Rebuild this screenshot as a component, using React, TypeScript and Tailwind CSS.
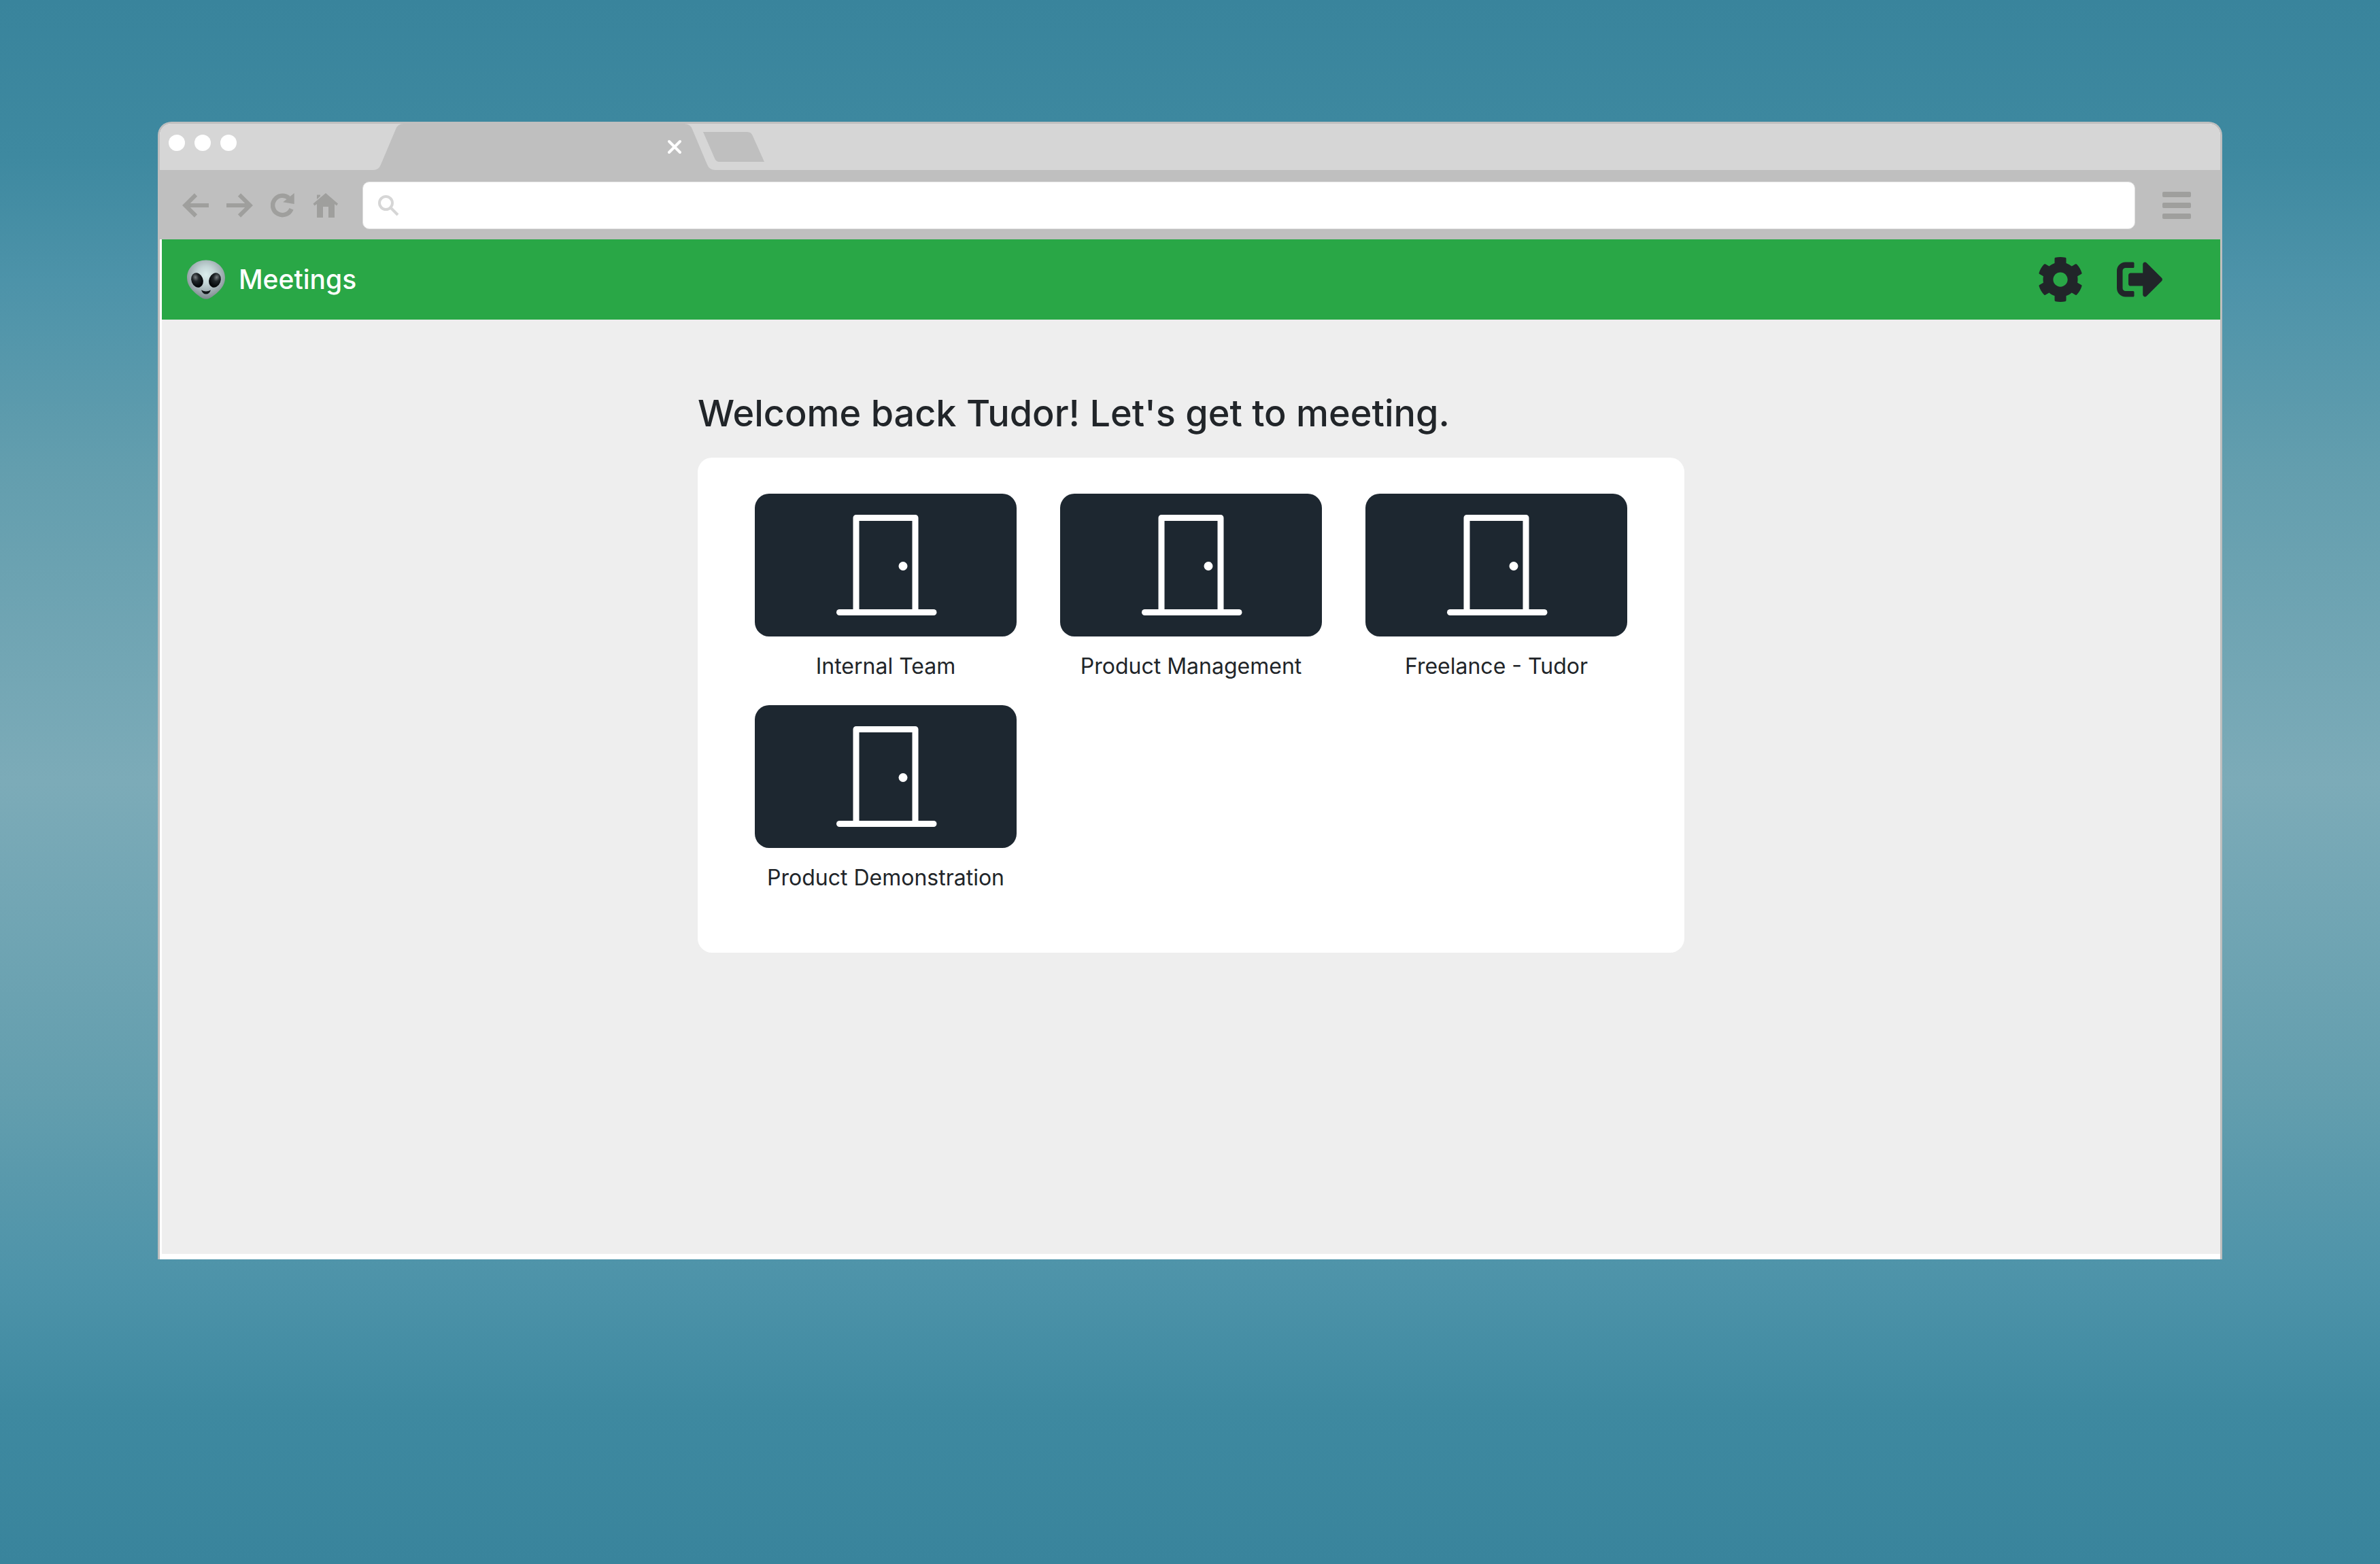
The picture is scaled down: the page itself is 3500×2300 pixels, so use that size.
import React from "react";
import { FaCog, FaSignOutAlt } from "react-icons/fa";

const rooms = ["Internal Team", "Product Management", "Freelance - Tudor", "Product Demonstration"];

function TabShape() {
  return (
    <svg className="absolute top-0 left-[300px]" width="600" height="68" viewBox="0 0 600 68" fill="#bfbfbf" aria-hidden="true">
      <path d="M14 68 Q22 68 25 60 L47 8 Q50 0 58 0 H471 Q480 0 483 8 L505 60 Q508 68 517 68 Z" />
      <path d="M499 12 H564 Q570 12 572 18 L589 56 H523 Q518 56 516 51 Z" />
    </svg>
  );
}

function BackIcon() {
  return (
    <svg width="39" height="36" viewBox="0 0 39 36" fill="none" stroke="#9f9f9d" strokeWidth="6" aria-hidden="true">
      <path d="M39 18 H5" />
      <path d="M20 2.5 L4.3 18 L20 33.5" />
    </svg>
  );
}

function ForwardIcon() {
  return (
    <svg width="39" height="36" viewBox="0 0 39 36" fill="none" stroke="#9f9f9d" strokeWidth="6" aria-hidden="true">
      <path d="M0 18 H34" />
      <path d="M19 2.5 L34.700 18 L19 33.5" />
    </svg>
  );
}

function ReloadIcon() {
  return (
    <svg width="36" height="36" viewBox="0 0 36 36" aria-hidden="true">
      <path d="M30.500 23.200 A14.200 14.200 0 1 1 26.500 7.100" fill="none" stroke="#9f9f9d" strokeWidth="6.500" />
      <path d="M34.700 0 V16 L18.200 13.300 Z" fill="#9f9f9d" />
    </svg>
  );
}

function HomeIcon() {
  return (
    <svg width="38" height="36" viewBox="0 0 38 36" fill="#9f9f9d" aria-hidden="true">
      <path d="M19 0 L37 15.500 L35 18.500 L32 16 V36 H23 V20 H15 V36 H6 V16 L2.500 18.500 L0.500 15.500 Z" />
      <path d="M6 2.500 H11 V4.500 L6 9 Z" />
    </svg>
  );
}

function SearchIcon() {
  return (
    <svg width="31" height="31" viewBox="0 0 31 31" fill="none" stroke="#d6d6d6" strokeWidth="4" aria-hidden="true">
      <circle cx="11.500" cy="11.500" r="9.500" />
      <path d="M18 18 L29 29" />
    </svg>
  );
}

function AlienLogo() {
  return (
    <svg width="58" height="58" viewBox="0 0 58 58" aria-hidden="true">
      <defs>
        <radialGradient id="skin" cx="0.5" cy="0.38" r="0.62">
          <stop offset="0" stopColor="#dcefee" />
          <stop offset="0.35" stopColor="#c4d6d7" />
          <stop offset="0.75" stopColor="#9aa8ac" />
          <stop offset="1" stopColor="#7c878b" />
        </radialGradient>
        <radialGradient id="leftEye" cx="0.45" cy="0.28" r="0.62">
          <stop offset="0" stopColor="#7a8082" />
          <stop offset="0.45" stopColor="#202629" />
          <stop offset="1" stopColor="#05080a" />
        </radialGradient>
        <radialGradient id="rightEye" cx="0.55" cy="0.28" r="0.62">
          <stop offset="0" stopColor="#7a8082" />
          <stop offset="0.45" stopColor="#202629" />
          <stop offset="1" stopColor="#05080a" />
        </radialGradient>
      </defs>
      <path d="M29 0.500 C45 0.500 57 12 57 26.500 C57 38 49 46 41 52 C36.500 55.500 33 57.800 29 57.800 C25 57.800 21.500 55.500 17 52 C9 46 1 38 1 26.500 C1 12 13 0.500 29 0.500 Z" fill="url(#skin)" />
      <ellipse cx="16" cy="30" rx="8.500" ry="11" transform="rotate(-22 16 30)" fill="url(#leftEye)" />
      <ellipse cx="42" cy="30" rx="8.500" ry="11" transform="rotate(22 42 30)" fill="url(#rightEye)" />
      <path d="M22 44.500 Q29 48.500 36 44.500 Q34 50.500 29 50.500 Q24 50.500 22 44.500 Z" fill="#111618" />
    </svg>
  );
}

function DoorIcon() {
  return (
    <svg width="150" height="148" viewBox="-2 0 150 148" fill="none" stroke="#ffffff" strokeWidth="9" aria-hidden="true">
      <path d="M29 143 V4.500 H116 V143" strokeLinejoin="round" />
      <path d="M4.500 143.500 H143" strokeLinecap="round" />
      <circle cx="98" cy="75.500" r="6.500" fill="#ffffff" stroke="none" />
    </svg>
  );
}

export default function App() {
  return (
    <div className="min-h-screen bg-[linear-gradient(to_bottom,#39849c_0%,#3e89a0_10%,#4d93a9_18%,#639eae_30%,#7cabb8_50%,#639eae_70%,#4d93a9_82%,#3e89a0_90%,#39849c_100%)] px-[232px] pt-[179px] pb-64 font-[Inter,'Liberation_Sans',sans-serif] text-[#212529]">
      <div className="overflow-hidden rounded-t-[20px] border-x-3 border-t-3 border-[#bfbfbf] bg-white">
        <div className="relative flex h-[68px] bg-[#d6d6d6]">
          <TabShape />
          <div className="relative flex w-[769px] justify-between pt-4 pl-[13px]">
            <div className="flex gap-[14px]">
              <span className="size-6 rounded-full bg-white" />
              <span className="size-6 rounded-full bg-white" />
              <span className="size-6 rounded-full bg-white" />
            </div>
            <button type="button" aria-label="Close tab" className="mt-[7px] flex size-6 justify-center">
              <svg width="22" height="22" viewBox="0 0 22 22" fill="none" stroke="#ffffff" strokeWidth="4" strokeLinecap="round" aria-hidden="true">
                <path d="M3 3 L19 19 M19 3 L3 19" />
              </svg>
            </button>
          </div>
        </div>

        <div className="flex h-[102px] items-center bg-[#bfbfbf] pt-0.5 pr-[43px] pl-[33px]">
          <nav aria-label="Browser" className="flex items-center gap-[26px]">
            <button type="button" aria-label="Back"><BackIcon /></button>
            <button type="button" aria-label="Forward"><ForwardIcon /></button>
            <button type="button" aria-label="Reload"><ReloadIcon /></button>
            <button type="button" aria-label="Home"><HomeIcon /></button>
          </nav>
          <label className="mr-10 ml-[35px] flex h-[70px] flex-1 items-center gap-4 rounded-[10px] border border-[#dedede] bg-white px-[22px]">
            <SearchIcon />
            <input type="text" aria-label="Address" className="h-full flex-1 text-3xl outline-none" />
          </label>
          <button type="button" aria-label="Menu" className="flex w-[42px] flex-col gap-2">
            <span className="h-2 w-full rounded-xs bg-[#9f9f9d]" />
            <span className="h-2 w-full rounded-xs bg-[#9f9f9d]" />
            <span className="h-2 w-full rounded-xs bg-[#9f9f9d]" />
          </button>
        </div>

        <div className="pb-2 pl-[3px]">
          <header className="flex h-[118px] items-center justify-between bg-[#29a746] pr-[84px] pl-9">
            <a href="#home" className="flex items-center gap-[19px] text-[39px] leading-[60px] font-medium text-white">
              <AlienLogo />
              Meetings
            </a>
            <div className="flex items-center gap-[49px] text-[68px]">
              <button type="button" aria-label="Settings"><FaCog /></button>
              <button type="button" aria-label="Sign out"><FaSignOutAlt /></button>
            </div>
          </header>

          <main className="min-h-[1374px] bg-[#eeeeee] pt-[103px]">
            <div className="mx-auto max-w-[1451px]">
              <h1 className="text-[54px] leading-[70px] font-medium">Welcome back Tudor! Let's get to meeting.</h1>
              <section className="mt-[30px] grid grid-cols-3 gap-x-16 rounded-[21px] bg-white px-[84px] py-[53px]">
                {rooms.map((room) => (
                  <a key={room} href="#room" className="pb-[31px] text-center text-[32px] leading-[52px]">
                    <span className="mb-[18px] flex h-[210px] items-center justify-center rounded-[21px] bg-[#1d2730]">
                      <DoorIcon />
                    </span>
                    {room}
                  </a>
                ))}
              </section>
            </div>
          </main>
        </div>
      </div>
    </div>
  );
}
